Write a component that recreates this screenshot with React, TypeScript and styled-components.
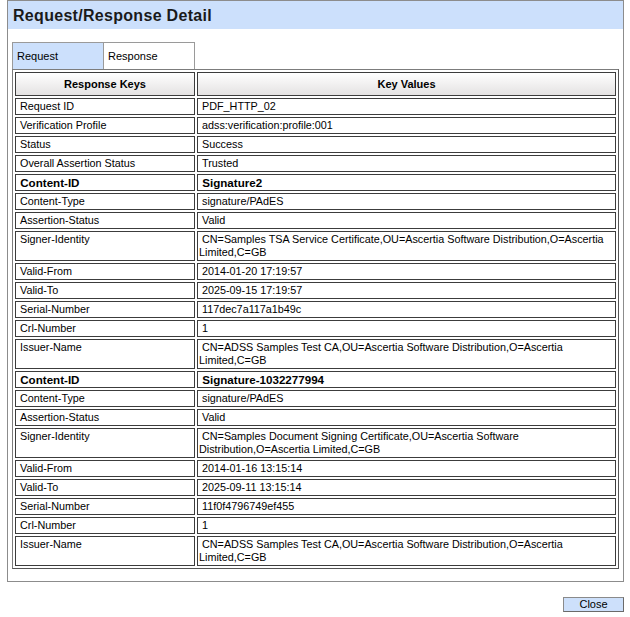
import React from 'react';
import styled, { createGlobalStyle } from 'styled-components';

const GlobalStyle = createGlobalStyle`
  html, body { margin: 0; padding: 0; background: #ffffff; }
  body { font-family: "Liberation Sans", Arial, sans-serif; color: #000; }
  * { box-sizing: border-box; }
`;

const Page = styled.div`
  padding-left: 7px;
  width: 630px;
`;

const Panel = styled.section`
  width: 617px;
  border: 1px solid #8c8c8c;
  background: #fff;
`;

const PanelHeader = styled.header`
  height: 28px;
  background: #cce0fc;
  display: flex;
  align-items: center;
  padding-left: 5px;
`;

const Title = styled.h1`
  margin: 0;
  font-size: 16px;
  font-weight: bold;
  letter-spacing: 0.3px;
  color: #1a1a1a;
  line-height: 20px;
  padding-top: 1px;
`;

const PanelBody = styled.div`
  padding: 13px 4px 12px 4px;
`;

const TabBar = styled.div`
  display: flex;
  height: 27px;
`;

const Tab = styled.div<{ $selected?: boolean }>`
  width: 92px;
  height: 27px;
  border: 1px solid #9a9a9a;
  border-bottom: none;
  background: ${(p) => (p.$selected ? '#ffffff' : '#cce0fc')};
  font-size: 11px;
  line-height: 13px;
  padding: 7px 0 0 4px;
  & + & { margin-left: -1px; }
`;

const DetailTable = styled.table`
  width: 100%;
  border-collapse: separate;
  border-spacing: 2px;
  table-layout: fixed;
  border: 1px solid #7c7c7c;
  border-right-color: #555;
  border-bottom-color: #555;
`;

const KeyCol = styled.col`
  width: 180px;
`;

const HeadCell = styled.th`
  height: 24px;
  border: 1px solid #3c3c3c;
  background: linear-gradient(#ffffff, #f4f3f3 40%, #e4e2e2);
  font-size: 11px;
  font-weight: bold;
  text-align: center;
  vertical-align: middle;
  padding: 0;
`;

const Cell = styled.td<{ $bold?: boolean }>`
  border: 1px solid #3c3c3c;
  padding: 1px;
  font-size: ${(p) => (p.$bold ? '11.6px' : '10.8px')};
  font-weight: ${(p) => (p.$bold ? 'bold' : 'normal')};
  line-height: 13px;
  vertical-align: top;
  text-align: left;
  word-wrap: break-word;
`;

const Footer = styled.div`
  width: 617px;
  display: flex;
  justify-content: flex-end;
  margin-top: 15px;
`;

const CloseButton = styled.button`
  width: 61px;
  height: 15px;
  padding: 0;
  border: 1px solid #8a8a8a;
  border-right-color: #6a6a6a;
  border-bottom-color: #6a6a6a;
  background: #cde0fb;
  font-family: "Liberation Sans", Arial, sans-serif;
  font-size: 11px;
  line-height: 13px;
  color: #000;
`;

type Row = { k: string; v: string; bold?: boolean };

const rows: Row[] = [
  { k: 'Request ID', v: 'PDF_HTTP_02' },
  { k: 'Verification Profile', v: 'adss:verification:profile:001' },
  { k: 'Status', v: 'Success' },
  { k: 'Overall Assertion Status', v: 'Trusted' },
  { k: 'Content-ID', v: 'Signature2', bold: true },
  { k: 'Content-Type', v: 'signature/PAdES' },
  { k: 'Assertion-Status', v: 'Valid' },
  { k: 'Signer-Identity', v: 'CN=Samples TSA Service Certificate,OU=Ascertia Software Distribution,O=Ascertia Limited,C=GB' },
  { k: 'Valid-From', v: '2014-01-20 17:19:57' },
  { k: 'Valid-To', v: '2025-09-15 17:19:57' },
  { k: 'Serial-Number', v: '117dec7a117a1b49c' },
  { k: 'Crl-Number', v: '1' },
  { k: 'Issuer-Name', v: 'CN=ADSS Samples Test CA,OU=Ascertia Software Distribution,O=Ascertia Limited,C=GB' },
  { k: 'Content-ID', v: 'Signature-1032277994', bold: true },
  { k: 'Content-Type', v: 'signature/PAdES' },
  { k: 'Assertion-Status', v: 'Valid' },
  { k: 'Signer-Identity', v: 'CN=Samples Document Signing Certificate,OU=Ascertia Software Distribution,O=Ascertia Limited,C=GB' },
  { k: 'Valid-From', v: '2014-01-16 13:15:14' },
  { k: 'Valid-To', v: '2025-09-11 13:15:14' },
  { k: 'Serial-Number', v: '11f0f4796749ef455' },
  { k: 'Crl-Number', v: '1' },
  { k: 'Issuer-Name', v: 'CN=ADSS Samples Test CA,OU=Ascertia Software Distribution,O=Ascertia Limited,C=GB' },
];

export default function App() {
  return (
    <Page>
      <GlobalStyle />
      <Panel>
        <PanelHeader>
          <Title>Request/Response Detail</Title>
        </PanelHeader>
        <PanelBody>
          <TabBar>
            <Tab>Request</Tab>
            <Tab $selected>Response</Tab>
          </TabBar>
          <DetailTable>
            <colgroup>
              <KeyCol />
              <col />
            </colgroup>
            <thead>
              <tr>
                <HeadCell>Response Keys</HeadCell>
                <HeadCell>Key Values</HeadCell>
              </tr>
            </thead>
            <tbody>
              {rows.map((r, i) => (
                <tr key={i}>
                  <Cell $bold={r.bold}>{'\u00a0'}{r.k}</Cell>
                  <Cell $bold={r.bold}>{'\u00a0'}{r.v}</Cell>
                </tr>
              ))}
            </tbody>
          </DetailTable>
        </PanelBody>
      </Panel>
      <Footer>
        <CloseButton>Close</CloseButton>
      </Footer>
    </Page>
  );
}
